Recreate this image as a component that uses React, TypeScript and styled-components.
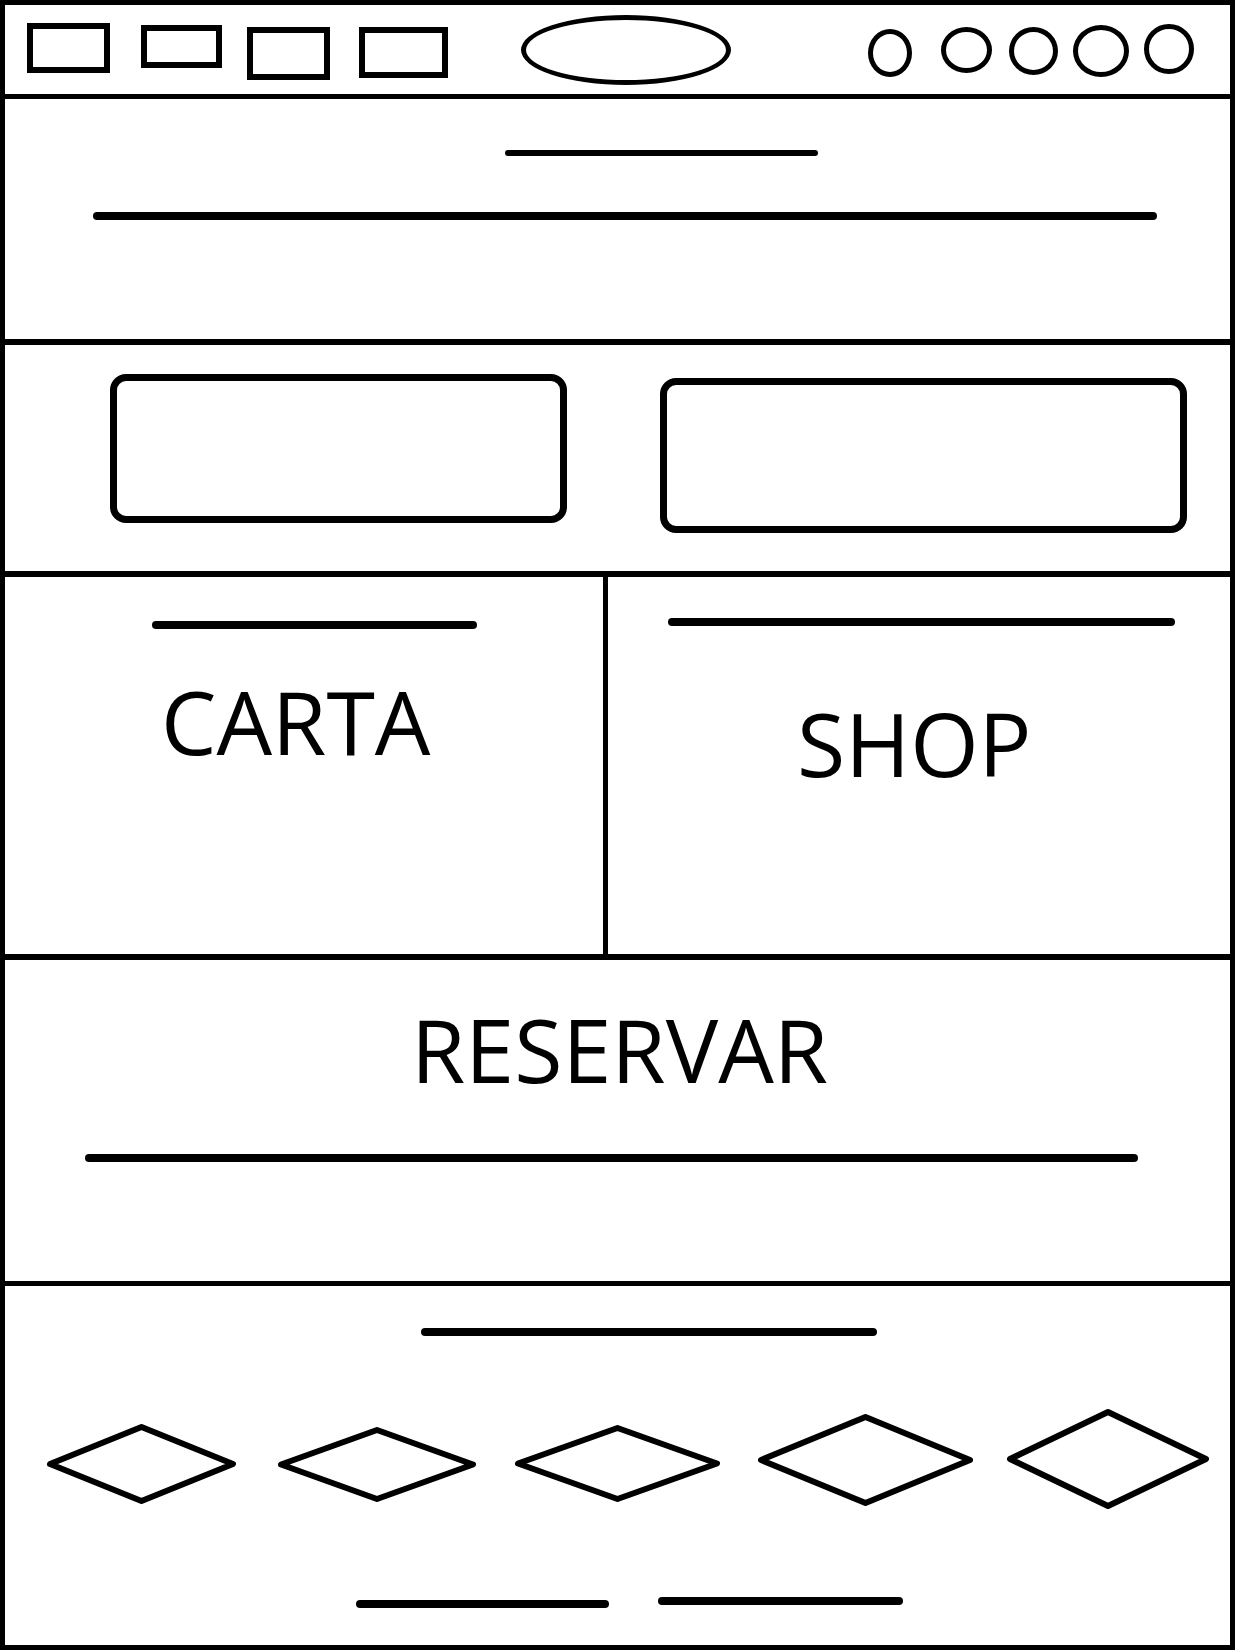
import React from "react";
import styled, { createGlobalStyle } from "styled-components";

const GlobalStyle = createGlobalStyle`
  html, body {
    margin: 0;
    padding: 0;
    background: #fff;
  }
  body {
    font-family: "Open Sans", "Noto Sans", sans-serif;
    color: #000;
  }
`;

const rects = [
  { w: 83, h: 50, ml: 0, mt: 18 },
  { w: 81, h: 43, ml: 31, mt: 20 },
  { w: 83, h: 53, ml: 25, mt: 22 },
  { w: 89, h: 51, ml: 29, mt: 22 },
];

const circles = [
  { w: 44, h: 48, ml: 137, mt: 24 },
  { w: 51, h: 46, ml: 29, mt: 22 },
  { w: 49, h: 48, ml: 17, mt: 22 },
  { w: 56, h: 52, ml: 15, mt: 20 },
  { w: 50, h: 50, ml: 15, mt: 19 },
];

const diamonds = [
  { w: 191, h: 82, ml: 41, mt: 15 },
  { w: 200, h: 77, ml: 40, mt: 18 },
  { w: 207, h: 79, ml: 37, mt: 16 },
  { w: 217, h: 94, ml: 36, mt: 5 },
  { w: 204, h: 102, ml: 32, mt: 0 },
];

export default function App() {
  return (
    <>
      <GlobalStyle />
      <Frame>
        <Header>
          {rects.map((r, i) => (
            <NavBox key={i} $w={r.w} $h={r.h} $ml={r.ml} $mt={r.mt} />
          ))}
          <Logo />
          {circles.map((c, i) => (
            <SocialDot key={i} $w={c.w} $h={c.h} $ml={c.ml} $mt={c.mt} />
          ))}
        </Header>

        <Hero>
          <Line $w={313} $h={6} $ml={500} />
          <Line $w={1064} $h={8} $ml={88} $mt={56} />
        </Hero>

        <Buttons>
          <CtaBox $w={457} $h={149} $ml={105} $mt={29} />
          <CtaBox $w={527} $h={155} $ml={93} $mt={33} />
        </Buttons>

        <Cards>
          <Card $divider>
            <Line $w={325} $h={8} $ml={147} $mt={44} />
            <Title $ml={156} $mt={48}>
              CARTA
            </Title>
          </Card>
          <Card>
            <Line $w={507} $h={8} $ml={60} $mt={41} />
            <Title $ml={189} $mt={73}>
              SHOP
            </Title>
          </Card>
        </Cards>

        <Reserve>
          <Title $ml={406} $mt={45}>
            RESERVAR
          </Title>
          <Line $w={1053} $h={8} $ml={80} $mt={61} />
        </Reserve>

        <Footer>
          <Line $w={456} $h={8} $ml={416} $mt={42} />
          <DiamondRow>
            {diamonds.map((d, i) => (
              <Diamond key={i} $ml={d.ml} $mt={d.mt} width={d.w} height={d.h}>
                <polygon
                  points={`${d.w / 2},4 ${d.w - 4},${d.h / 2} ${d.w / 2},${d.h - 4} 4,${d.h / 2}`}
                  fill="none"
                  stroke="#000"
                  strokeWidth={6}
                  strokeLinejoin="round"
                />
              </Diamond>
            ))}
          </DiamondRow>
          <LinkRow>
            <Line $w={253} $h={8} $ml={351} $mt={3} />
            <Line $w={245} $h={8} $ml={49} />
          </LinkRow>
        </Footer>
      </Frame>
    </>
  );
}

type BoxProps = { $w: number; $h: number; $ml?: number; $mt?: number };

const Frame = styled.div`
  width: 1235px;
  box-sizing: border-box;
  border: 5px solid #000;
  display: flex;
  flex-direction: column;
`;

const Header = styled.header`
  height: 89px;
  border-bottom: 5px solid #000;
  display: flex;
  align-items: flex-start;
  padding-left: 22px;
`;

const NavBox = styled.div<BoxProps>`
  flex: none;
  box-sizing: border-box;
  width: ${(p) => p.$w}px;
  height: ${(p) => p.$h}px;
  margin-left: ${(p) => p.$ml ?? 0}px;
  margin-top: ${(p) => p.$mt ?? 0}px;
  border: 6px solid #000;
`;

const Logo = styled.div`
  flex: none;
  box-sizing: border-box;
  width: 210px;
  height: 70px;
  margin-left: 73px;
  margin-top: 10px;
  border: 5px solid #000;
  border-radius: 50%;
`;

const SocialDot = styled.div<BoxProps>`
  flex: none;
  box-sizing: border-box;
  width: ${(p) => p.$w}px;
  height: ${(p) => p.$h}px;
  margin-left: ${(p) => p.$ml ?? 0}px;
  margin-top: ${(p) => p.$mt ?? 0}px;
  border: 5px solid #000;
  border-radius: 50%;
`;

const Line = styled.div<{ $w: number; $h: number; $ml?: number; $mt?: number }>`
  flex: none;
  width: ${(p) => p.$w}px;
  height: ${(p) => p.$h}px;
  margin-left: ${(p) => p.$ml ?? 0}px;
  margin-top: ${(p) => p.$mt ?? 0}px;
  background: #000;
  border-radius: ${(p) => p.$h / 2}px;
`;

const Hero = styled.section`
  padding-top: 51px;
  height: 189px;
  border-bottom: 6px solid #000;
  display: flex;
  flex-direction: column;
`;

const Buttons = styled.section`
  height: 226px;
  border-bottom: 6px solid #000;
  display: flex;
  align-items: flex-start;
`;

const CtaBox = styled.div<BoxProps>`
  flex: none;
  box-sizing: border-box;
  width: ${(p) => p.$w}px;
  height: ${(p) => p.$h}px;
  margin-left: ${(p) => p.$ml ?? 0}px;
  margin-top: ${(p) => p.$mt ?? 0}px;
  border: 7px solid #000;
  border-radius: 16px;
`;

const Cards = styled.section`
  height: 377px;
  border-bottom: 6px solid #000;
  display: flex;
`;

const Card = styled.div<{ $divider?: boolean }>`
  width: ${(p) => (p.$divider ? "598px" : "auto")};
  flex: ${(p) => (p.$divider ? "none" : "1")};
  border-right: ${(p) => (p.$divider ? "5px solid #000" : "none")};
  display: flex;
  flex-direction: column;
`;

const Title = styled.h2<{ $ml: number; $mt: number }>`
  margin: ${(p) => p.$mt}px 0 0 ${(p) => p.$ml}px;
  font-family: "Open Sans", "Noto Sans", sans-serif;
  font-size: 88px;
  font-weight: 400;
  line-height: 1;
  white-space: nowrap;
`;

const Reserve = styled.section`
  height: 321px;
  border-bottom: 5px solid #000;
  display: flex;
  flex-direction: column;
`;

const Footer = styled.footer`
  height: 359px;
  display: flex;
  flex-direction: column;
`;

const DiamondRow = styled.div`
  display: flex;
  align-items: flex-start;
  margin-top: 72px;
`;

const Diamond = styled.svg<{ $ml: number; $mt: number }>`
  flex: none;
  display: block;
  margin-left: ${(p) => p.$ml}px;
  margin-top: ${(p) => p.$mt}px;
`;

const LinkRow = styled.div`
  display: flex;
  align-items: flex-start;
  margin-top: 87px;
`;
